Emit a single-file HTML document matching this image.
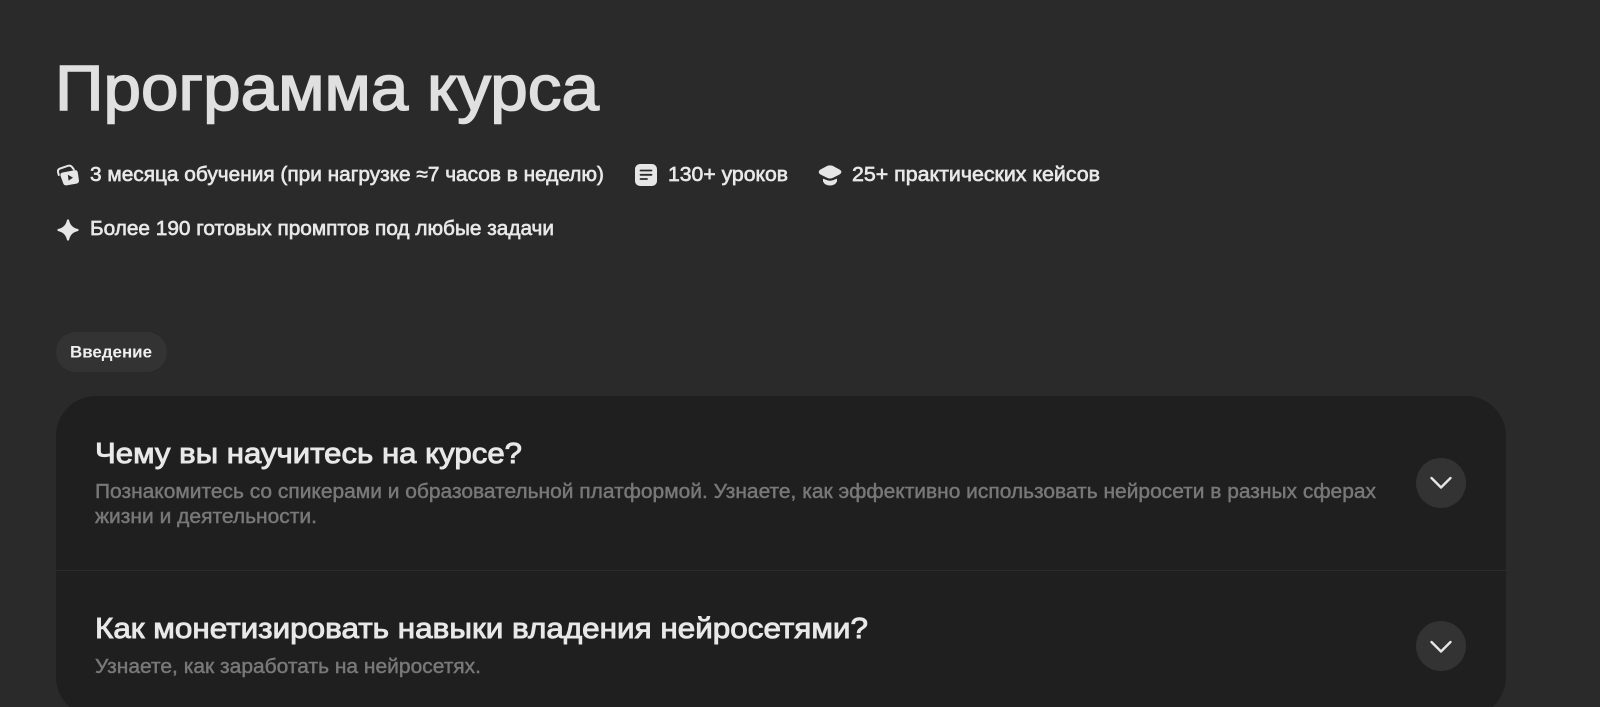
<!DOCTYPE html>
<html lang="ru">
<head>
<meta charset="utf-8">
<title>Программа курса</title>
<style>
html,body{margin:0;padding:0;width:1600px;height:707px;overflow:hidden;background:#2a2a2a}
svg{display:block}
text{font-family:"Liberation Sans",sans-serif}
.stat{font-size:20.5px;fill:#e8e8e8;stroke:#e8e8e8;stroke-width:.65px}
.head{font-size:28.5px;fill:#e8e8e8;stroke:#e8e8e8;stroke-width:.9px}
.desc{font-size:20.5px;fill:#787878;stroke:#787878;stroke-width:.45px}
</style>
</head>
<body>
<svg width="1600" height="707" viewBox="0 0 1600 707" xmlns="http://www.w3.org/2000/svg">
<rect width="1600" height="707" fill="#2a2a2a"/>

<text x="55" y="110" font-size="64" fill="#e0e0e0" stroke="#e0e0e0" stroke-width="1.5" textLength="544" lengthAdjust="spacingAndGlyphs">Программа курса</text>

<!-- video icon -->
<path d="M58.8 175 L58 172 Q57.6 169.6 60 168.6 L68 165.8 Q70.4 165.2 72 167 L73.8 169.4" fill="none" stroke="#e6e6e6" stroke-width="2" stroke-linecap="round" stroke-linejoin="round"/>
<path d="M62.5 172.5 L74.5 170.2 Q77.3 169.8 77.8 172.5 L79 180.5 Q79.2 183 76.6 183.6 L66.5 185.4 Q64 185.7 63.2 183.3 L60.5 175.8 Q59.8 173.2 62.5 172.5 Z" fill="#e6e6e6"/>
<path d="M67.8 174.8 L73 177.6 L68.6 180.6 Z" fill="#2a2a2a"/>
<text class="stat" x="90" y="181" textLength="514" lengthAdjust="spacingAndGlyphs">3 месяца обучения (при нагрузке ≈7 часов в неделю)</text>

<!-- note icon -->
<rect x="635" y="164" width="22" height="22" rx="5" fill="#e6e6e6"/>
<path d="M640.5 170.5 H651.5 M640.5 174.8 H651.5 M640.5 179 H647" stroke="#2a2a2a" stroke-width="1.8" stroke-linecap="round" fill="none"/>
<text class="stat" x="668" y="181" textLength="120" lengthAdjust="spacingAndGlyphs">130+ уроков</text>

<!-- cap icon -->
<path d="M827.5 165.8 Q830 165 832.5 165.8 L839.5 169.5 Q842 171 841.2 172.8 Q840.8 173.8 839.5 174.5 L832.5 178 Q830 179 827.5 178 L820.5 174.5 Q818.8 173.6 818.8 172 Q818.8 170.4 820.5 169.5 Z" fill="#e6e6e6"/>
<path d="M823 178.6 L827.5 180.4 Q830 181.2 832.5 180.4 L837 178.6 V181.5 Q835 185.5 830 185.5 Q825 185.5 823 181.5 Z" fill="#e6e6e6"/>
<text class="stat" x="852" y="181" textLength="248" lengthAdjust="spacingAndGlyphs">25+ практических кейсов</text>

<!-- sparkle -->
<path d="M68 220.5 C69.2 226 72.5 229 77.5 230 C72.5 231 69.2 234 68 239.5 C66.8 234 63.5 231 58.5 230 C63.5 229 66.8 226 68 220.5 Z" fill="#e6e6e6" stroke="#e6e6e6" stroke-width="2.2" stroke-linejoin="round"/>
<text class="stat" x="90" y="235" textLength="464" lengthAdjust="spacingAndGlyphs">Более 190 готовых промптов под любые задачи</text>

<!-- pill -->
<rect x="56" y="332" width="111" height="40" rx="20" fill="#333333"/>
<text x="70" y="357.5" font-size="16.5" font-weight="700" fill="#f0f0f0" textLength="82" lengthAdjust="spacingAndGlyphs">Введение</text>

<!-- card -->
<rect x="56" y="396" width="1450" height="321" rx="40" fill="#1f1f1f"/>
<rect x="56" y="570" width="1450" height="1" fill="#2b2b2b"/>

<text class="head" x="95" y="463" textLength="427" lengthAdjust="spacingAndGlyphs">Чему вы научитесь на курсе?</text>
<text class="desc" x="95" y="498" textLength="1281" lengthAdjust="spacingAndGlyphs">Познакомитесь со спикерами и образовательной платформой. Узнаете, как эффективно использовать нейросети в разных сферах</text>
<text class="desc" x="95" y="523" textLength="222" lengthAdjust="spacingAndGlyphs">жизни и деятельности.</text>
<circle cx="1441" cy="483" r="25" fill="#333333"/>
<path d="M1431.5 478 L1441 487.5 L1450.5 478" fill="none" stroke="#e6e6e6" stroke-width="2.4" stroke-linecap="round" stroke-linejoin="round"/>

<text class="head" x="95" y="638" textLength="773" lengthAdjust="spacingAndGlyphs">Как монетизировать навыки владения нейросетями?</text>
<text class="desc" x="95" y="673" textLength="386" lengthAdjust="spacingAndGlyphs">Узнаете, как заработать на нейросетях.</text>
<circle cx="1441" cy="646" r="25" fill="#333333"/>
<path d="M1431.5 642 L1441 651.5 L1450.5 642" fill="none" stroke="#e6e6e6" stroke-width="2.4" stroke-linecap="round" stroke-linejoin="round"/>
</svg>
</body>
</html>
